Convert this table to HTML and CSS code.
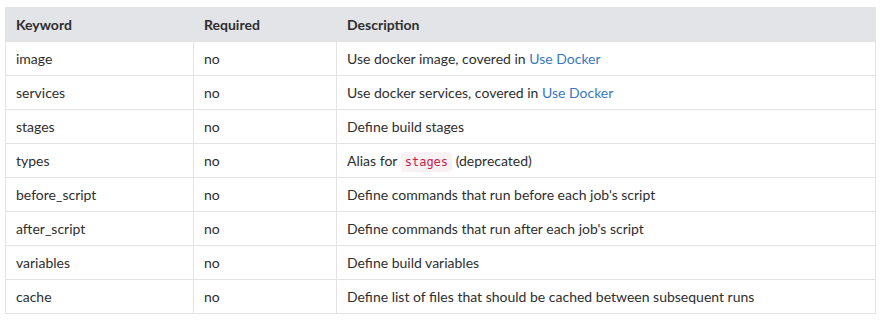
FILE: index.html
```html
<!DOCTYPE html>
<html lang="en">
<head>
    <meta charset="UTF-8">
    <title>Keywords</title>
    <link rel="stylesheet" href="styles.css">
</head>
<body>
    <table class="keywords">
        <thead>
            <tr>
                <th class="col-key">Keyword</th>
                <th class="col-req">Required</th>
                <th>Description</th>
            </tr>
        </thead>
        <tbody>
            <tr><td>image</td><td>no</td><td>Use docker image, covered in <a href="#">Use Docker</a></td></tr>
            <tr><td>services</td><td>no</td><td>Use docker services, covered in <a href="#">Use Docker</a></td></tr>
            <tr><td>stages</td><td>no</td><td>Define build stages</td></tr>
            <tr><td>types</td><td>no</td><td>Alias for <code>stages</code> (deprecated)</td></tr>
            <tr><td>before_script</td><td>no</td><td>Define commands that run before each job's script</td></tr>
            <tr><td>after_script</td><td>no</td><td>Define commands that run after each job's script</td></tr>
            <tr><td>variables</td><td>no</td><td>Define build variables</td></tr>
            <tr><td>cache</td><td>no</td><td>Define list of files that should be cached between subsequent runs</td></tr>
        </tbody>
    </table>
</body>
</html>
```

FILE: styles.css
```css
body {
    margin: 0;
    padding: 7px 8px 0 5px;
    background: #fff;
    font-family: Lato, "Noto Sans", sans-serif;
    font-size: 14px;
    color: #2e2e2e;
}

.keywords {
    width: 871px;
    border-collapse: collapse;
    border: 1px solid #e3e3e3;
}

.keywords th,
.keywords td {
    text-align: left;
    padding: 0 10px;
    border: 1px solid #e3e3e3;
}

.keywords th {
    height: 33px;
    background: #e2e4e7;
    font-weight: bold;
    color: #2e2e2e;
}

.keywords td {
    height: 33px;
}

.col-key {
    width: 167px;
}

.col-req {
    width: 122px;
}

.keywords a {
    color: #3a78c3;
    text-decoration: none;
}

.keywords code {
    font-family: "DejaVu Sans Mono", monospace;
    font-size: 12px;
    color: #c7254e;
    background: #f9f2f4;
    padding: 3px 4px;
    border-radius: 4px;
}
```
